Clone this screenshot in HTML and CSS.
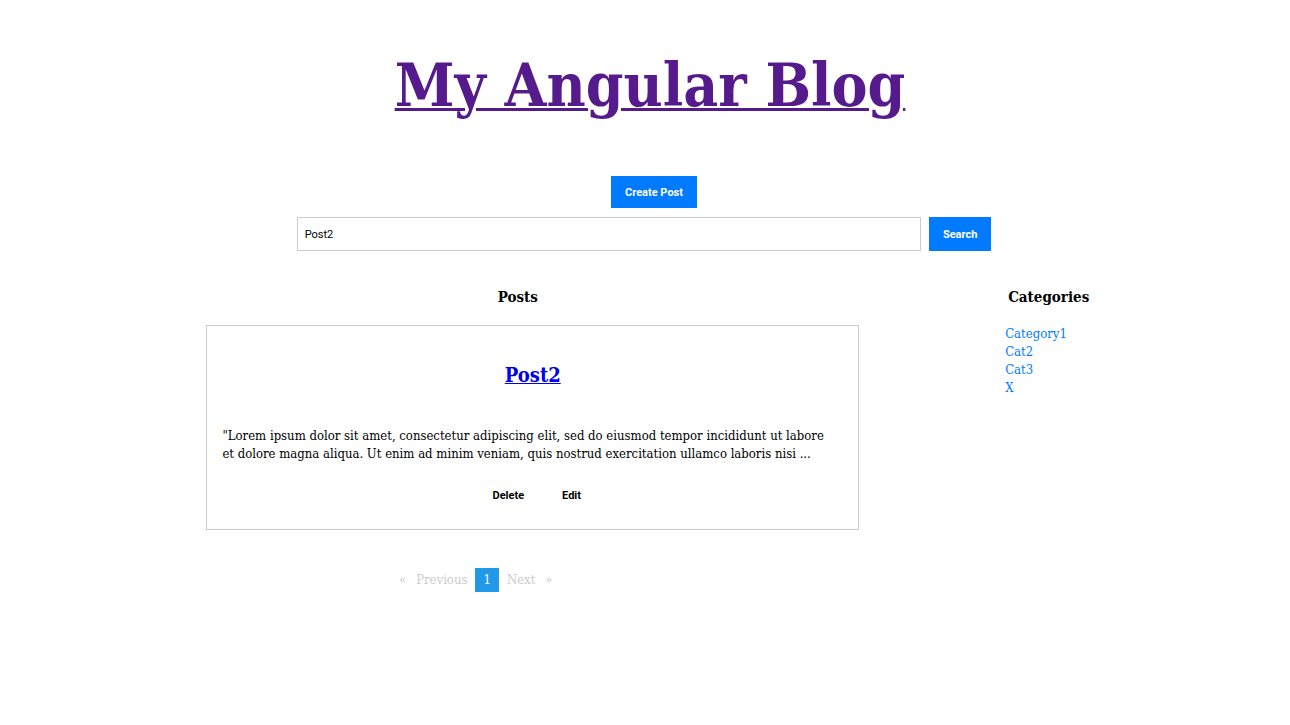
FILE: index.html
```html
<!DOCTYPE html>
<html lang="en">
<head>
<meta charset="utf-8">
<meta name="viewport" content="width=device-width, initial-scale=1">
<title>My Angular Blog</title>
<link rel="stylesheet" href="styles.css">
</head>
<body>
<header class="site-header">
  <h1 class="site-title"><a href="#">My Angular Blog</a></h1>
  <button class="button" type="button">Create Post</button>
  <form class="search">
    <input class="search-input" type="text" aria-label="Search posts" value="Post2">
    <button class="button" type="submit">Search</button>
  </form>
</header>
<main class="content">
  <section class="posts">
    <h3 class="section-title posts-title">Posts</h3>
    <article class="card">
      <h2 class="card-title"><a href="#">Post2</a></h2>
      <p class="card-text">"Lorem ipsum dolor sit amet, consectetur adipiscing elit, sed do eiusmod tempor incididunt ut labore et dolore magna aliqua. Ut enim ad minim veniam, quis nostrud exercitation ullamco laboris nisi ...</p>
      <div class="card-actions">
        <button class="plain-button" type="button">Delete</button>
        <button class="plain-button" type="button">Edit</button>
      </div>
    </article>
    <nav class="pagination" aria-label="Pagination">
      <span class="page-step"><span>«</span><span>Previous</span></span>
      <span class="page-current" aria-current="page">1</span>
      <span class="page-step"><span>Next</span><span>»</span></span>
    </nav>
  </section>
  <aside class="categories">
    <h3 class="section-title categories-title">Categories</h3>
    <ul class="category-list">
      <li><a href="#">Category1</a></li>
      <li><a href="#">Cat2</a></li>
      <li><a href="#">Cat3</a></li>
      <li><a href="#">X</a></li>
    </ul>
  </aside>
</main>
</body>
</html>
```
FILE: styles.css
```css
* {
  box-sizing: border-box;
}

body {
  margin: 0;
  background: #fff;
  color: #000;
  font-family: "DejaVu Serif Condensed", "DejaVu Serif", serif;
  font-stretch: condensed;
  font-size: 13px;
  line-height: 18px;
}

h1,
h2,
h3,
p,
ul {
  margin: 0;
}

.site-header {
  display: flex;
  flex-direction: column;
  align-items: center;
  padding: 46px 0 0 18px;
}

.site-title {
  margin: 0 8px 52px 0;
  font-size: 60px;
  line-height: 78px;
}

.site-title a {
  color: #551a8b;
  text-decoration-thickness: 3px;
}

.button,
.plain-button,
.search-input {
  font-family: Roboto, sans-serif;
  font-size: 11px;
  font-stretch: normal;
}

.button {
  padding: 0 14px;
  height: 32px;
  border: 0;
  background: #007bff;
  color: #fff;
  font-weight: 700;
}

.search {
  display: flex;
  gap: 8px;
  width: calc(55% - 5px);
  margin: 9px 20px 0 0;
}

.search-input {
  flex: 1;
  min-width: 0;
  padding: 0 7px;
  border: 1px solid #ccc;
  color: #000;
}

.search .button {
  height: 34px;
}

.content {
  display: grid;
  grid-template-columns: 652fr 233fr;
  gap: 146px;
  padding: 36px 4% 0 16%;
}

.section-title {
  font-size: 15px;
  line-height: 20px;
}

.posts-title {
  padding-right: 30px;
  text-align: center;
}

.card {
  margin-top: 18px;
  padding: 35px 15px 17px;
  border: 1px solid #ccc;
}

.card-title {
  font-size: 20px;
  line-height: 28px;
  text-align: center;
}

.card-title a {
  color: #0000ee;
  text-decoration-thickness: 1px;
}

.card-text {
  margin-top: 38px;
  padding-right: 8px;
}

.card-actions {
  display: flex;
  justify-content: center;
  gap: 8px;
  margin: 15px 0 0 8px;
}

.plain-button {
  height: 34px;
  padding: 0 15px;
  border: 0;
  background: transparent;
  color: #000;
  font-weight: 700;
}

.pagination {
  display: flex;
  justify-content: center;
  gap: 8px;
  margin-top: 38px;
  padding-right: 114px;
  color: #ccc;
  line-height: 24px;
}

.page-step {
  display: flex;
  gap: 10px;
}

.page-current {
  padding: 0 8px;
  background: #2199e8;
  color: #fefefe;
}

.categories-title {
  padding-left: 3px;
}

.category-list {
  margin-top: 18px;
  padding: 0;
  list-style: none;
}

.category-list a {
  color: #007bff;
  text-decoration: none;
}
```
